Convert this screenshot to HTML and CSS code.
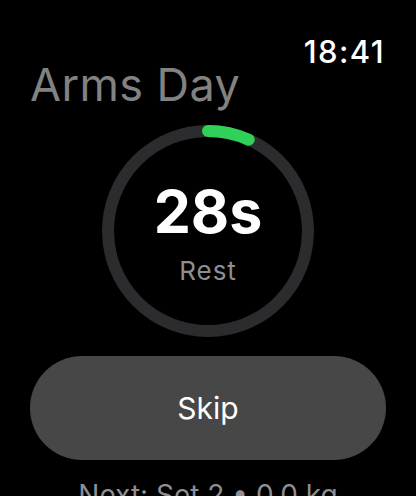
FILE: index.html
```html
<!DOCTYPE html>
<html lang="en">
<head>
  <meta charset="UTF-8" />
  <meta name="viewport" content="width=device-width, initial-scale=1.0"/>
  <title>Arms Day - Rest</title>
  <link rel="stylesheet" href="styles.css">
</head>
<body>
  <header class="status">
    <span class="clock">18:41</span>
  </header>

  <h1 class="title">Arms Day</h1>

  <div class="timer">
    <svg class="ring" width="212" height="212" viewBox="0 0 212 212">
      <!-- track -->
      <circle cx="106" cy="106" r="100" fill="none" stroke="#2c2c2e" stroke-width="12" />
      <!-- elapsed: 2 of 30 seconds -->
      <circle cx="106" cy="106" r="100" fill="none" stroke="#30d158" stroke-width="12"
        stroke-linecap="round" stroke-dasharray="41.9 628.3" transform="rotate(-90 106 106)" />
    </svg>
    <div class="timer-text">
      <div class="seconds">28s</div>
      <div class="label">Rest</div>
    </div>
  </div>

  <button class="skip">Skip</button>

  <p class="next">Next: Set 2 • 0.0 kg</p>
</body>
</html>
```

FILE: styles.css
```css
html {
  background-color: #000;
}

body {
  margin: 0;
  padding: 0;
  background-color: #000;
  color: #fff;
  font-family: "Inter", "Noto Sans", sans-serif;
  width: 416px;
  display: flex;
  flex-direction: column;
  align-items: center;
}

body > * {
  flex-shrink: 0;
}

.status {
  align-self: stretch;
  display: flex;
  justify-content: flex-end;
  padding: 40px 31px 0 0;
}

.clock {
  font-size: 31px;
  font-weight: 500;
  line-height: 24px;
  letter-spacing: 1.4px;
}

.title {
  align-self: stretch;
  margin: 1px 0 0 30px;
  font-size: 45px;
  font-weight: 400;
  line-height: 40px;
  letter-spacing: 0.4px;
  color: #828282;
}

.timer {
  margin-top: 20px;
  width: 212px;
  height: 212px;
  display: grid;
}

.ring,
.timer-text {
  grid-area: 1 / 1;
}

.timer-text {
  display: flex;
  flex-direction: column;
  align-items: center;
  padding-top: 57px;
}

.seconds {
  font-size: 59px;
  font-weight: 700;
  line-height: 60px;
}

.label {
  margin-top: 14px;
  font-size: 26px;
  line-height: 30px;
  letter-spacing: 1px;
  color: #8e8e93;
}

.skip {
  margin-top: 19px;
  width: 356px;
  height: 104px;
  border: none;
  border-radius: 52px;
  background-color: #474747;
  color: #fff;
  font-family: inherit;
  font-size: 30px;
  font-weight: 400;
}

.next {
  margin: 18px 0 0;
  font-size: 28px;
  line-height: 34px;
  color: #8e8e93;
  white-space: nowrap;
}
```
